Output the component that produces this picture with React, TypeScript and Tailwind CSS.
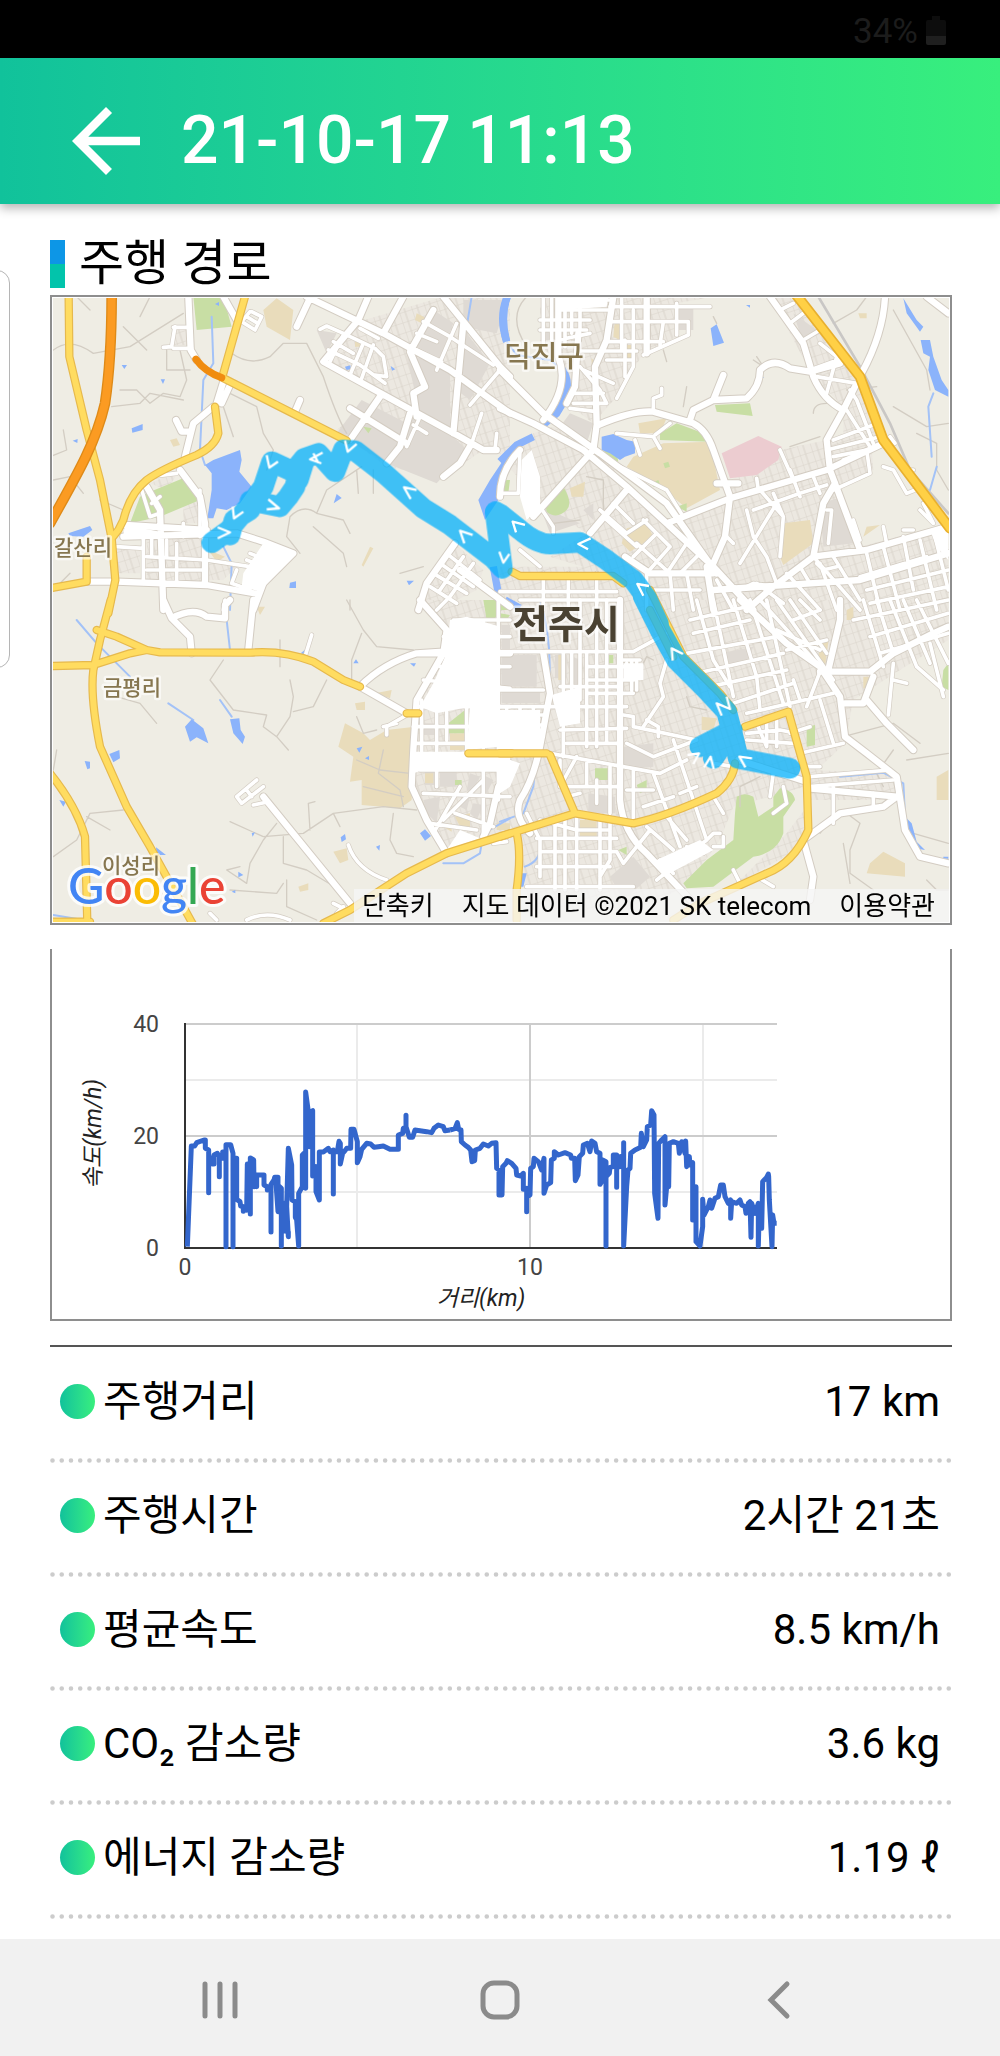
import React from 'react';
import { MdArrowBack } from 'react-icons/md';

type Tile = 'nw' | 'ne' | 'sw' | 'se';
type TilePaths = Partial<Record<Tile, string>>;

// The map is drawn in four tiles, each one at three times the map's scale
const TILE_TRANSFORM: Record<Tile, string> = {
  nw: 'translate(50 290) scale(0.33333)',
  ne: 'translate(500 290) scale(0.33333)',
  sw: 'translate(50 600) scale(0.33333)',
  se: 'translate(500 600) scale(0.33333)',
};

const BLOCKS: TilePaths = {
  nw: 'M925 95L1180 20H1380V500L1300 480L1180 560L1010 530L860 420L980 320L820 215Z M1215 760L1300 840L1280 900L1160 960H1105L1130 880Z M290 740H470V880H290Z M300 580L390 540L350 600Z M370 115H410V165H370Z M400 640L450 635L465 700H400Z M200 770H270V850H200Z M470 810L560 830L520 870H470Z',
  ne: 'M120 20H640L530 40V140L430 190L350 320L280 400L200 340L170 220L120 160Z M160 410L300 480L380 590L500 700L690 620L660 590L840 480L980 450L1110 400L1120 540L1010 590L1080 770L1345 700V960H440L380 870L150 800L260 730L120 640L0 500L100 430Z M810 20H890L1070 260L1150 450L1030 440V350L940 260Z M0 830H380L470 960H0Z',
  sw: 'M1110 0L1190 90L1180 160L1100 300L1090 450L1085 560L1130 660L1190 760L1310 715L1380 690V0Z',
  se: 'M0 0H1345V120L1200 210L1060 300L1035 430L930 530L915 560L700 620L660 720L560 860L400 930H90L50 700L0 640Z M930 510L1180 520L1190 600L930 600Z M860 700L920 620L910 740L800 800L700 860Z',
};

// Dense residential areas where the streets run together
const DENSE_STREETS: TilePaths = {
  nw: 'M640 760L725 795L630 905L575 890L580 850Z M225 705L330 725L320 745L220 735Z',
  ne: 'M180 20H325L320 50L180 60Z M65 510L95 480L120 560V650L80 690L60 620Z M1290 720L1345 700V810L1310 770Z',
  sw: 'M1200 60L1250 50L1350 80L1345 440L1250 450L1260 320L1160 340L1110 320L1150 250L1190 160Z M1090 455H1380V510H1120L1090 520Z M1190 750L1230 690L1290 715Z',
  se: 'M0 330H120V450H0Z M155 285L240 260V370L180 380Z M370 190H430V240H370Z M0 470L60 490L30 560L0 580Z M470 780L600 720L640 750L490 830Z',
};

const DARK_BLOCKS: TilePaths = {
  nw: 'M935 330L1070 400L1130 350L1210 440L1250 480L1160 580L1010 520L860 430Z M1070 190L1200 240L1200 420L1110 380Z M1150 60L1210 100L1160 230L1080 180Z M1240 30H1370L1340 130L1240 110Z M800 120L860 130L830 190Z M1250 130L1320 220L1260 330L1220 300Z',
  ne: 'M240 700L120 650L150 730Z M530 50H580V120H530Z M960 640L1030 620L1060 760L970 770Z M250 660L280 640V690Z M130 120H180V150H130Z M880 70L950 120L910 160Z M210 370L280 400L260 460L180 410Z',
  sw: 'M1355 75H1380V150H1355Z M1205 105H1250V145H1205Z M1265 70H1285V100H1265Z M1320 165H1335V200H1320Z M1320 215H1340V260H1320Z M1355 175H1380V250H1355Z M1125 515H1155V555H1125Z M1170 515H1220V560H1170Z M1260 520L1290 530L1270 570H1250Z M1300 525L1330 540L1310 580H1290Z M1120 600L1170 590L1160 670L1130 640Z M1235 590H1260L1250 630L1230 620Z M1270 610L1300 615L1280 660L1260 640Z M1120 370H1155V405H1120Z M1265 275H1280V310H1265Z M1265 330H1280V370H1265Z M1355 275H1380V305H1355Z',
  se: 'M5 165H110V260H5Z M5 275H120V310H5Z M165 165H200V235H165Z M665 160L760 140L740 190L680 200Z M330 830L400 770L450 830L370 900Z M265 580L345 590V640H265Z M370 440L460 430V500L370 510Z M215 170L245 180V260H215Z',
};

const GREENS: TilePaths = {
  nw: 'M430 20H520L545 110L440 120Z M290 610L410 560L450 630L330 680L240 700L270 620Z M940 410L965 415L955 430Z M1330 930H1380V960H1330Z',
  ne: 'M645 345L750 340L758 378L650 365Z M480 430L530 400L610 430L625 455L480 450Z M135 640Q160 590 190 590Q220 640 200 660Q170 690 140 665Z M310 480L350 490L355 515H330Z M490 520l15 -5l5 15l-15 5Z M455 580l20 -10l5 15l-20 5Z M530 650L560 640V665Z M0 570H30L25 610H0Z',
  sw: 'M1195 370L1245 330L1250 400H1195Z M1300 0H1380L1330 60H1310Z M1215 540H1235V555H1215Z',
  se: 'M710 590Q735 575 760 590L775 650L820 620L820 590L840 565Q880 570 885 600L850 650V700Q830 760 760 770L640 860L560 865L550 850L620 780L700 720L705 640Z M285 505H325V540H285Z M920 380L945 375V435L920 440Z M410 555L440 540V570L420 580Z M1330 210L1345 190V270L1325 260Z M355 750L380 740V765Z M0 40L30 45L20 60L0 55Z M325 165H340V190H325Z',
};

const SANDS: TilePaths = {
  nw: 'M640 60L680 25L730 60L720 150L650 110Z M435 20H460V70H440Z M360 450L380 445L390 465L370 470Z M475 780L525 800L500 815Z M960 770L970 775L940 830L935 825Z M1100 70L1130 85L1115 100L1095 90Z M915 155H935V170H915Z',
  ne: 'M400 500L490 460L630 455L660 600L560 655L480 590L380 530Z M415 400L500 385L480 430L420 430Z M210 595L255 575L250 620L215 620Z M850 700L930 690L940 760L850 825L835 790Z M1075 70H1100V85H1080Z M380 715L440 700L460 740L390 785L365 760Z M345 90L370 110L360 150L340 140Z M380 165H405V215H380Z M275 205L295 225V255L275 240Z M1100 710L1140 705L1090 740Z',
  sw: 'M885 370L940 400L960 420L1010 390L1095 380L1085 600L1050 625L935 615V540L900 545L910 470L865 440Z M1200 400H1250V450H1200Z M1205 110H1240V140H1205Z M1125 520H1150V550H1125Z M850 755L890 745L895 780L870 790Z M745 860L775 850V870L750 875Z M915 310L945 305V330H920Z M975 280L1025 270L1020 295Z M620 20H645L630 45Z M1215 650L1260 640V690L1230 680Z M1340 670H1380V690H1340Z M1180 680L1205 670V695Z',
  se: 'M605 350L650 355L640 390H605Z M240 660H290V720H240Z M1110 790L1150 755L1215 790V830L1100 820Z M960 130L985 125L975 200L955 180Z M1310 530L1345 510V600H1310Z M1090 230H1120V265H1090Z M1040 30L1060 20V60H1040Z M175 165H190V240H175Z',
};

const PINKS: TilePaths = {
  ne: 'M665 490L775 438L845 470L835 510L770 555L690 565Z',
};

const WATERS: TilePaths = {
  nw: 'M465 525L490 510L570 480L575 510L568 545L605 590L570 640L530 660L500 655L490 685H472L485 600V550Z M1380 480L1320 570L1285 630L1305 690L1345 630Z M55 730L120 708L127 720L100 740L60 738Z M245 415L278 402V420L247 428Z M215 225h16l-8 12Z M332 268h13l-6 14Z M68 452l15 -5l-1 12Z M860 612l15 12l-24 16Z M720 878l18 -4v20h-20Z M1070 872h22l-15 14Z M885 230l16 -4l2 12l-14 2Z M1022 228l14 10l-10 4Z M495 42l12 -6v12Z',
  ne: 'M305 440L340 432L380 450L405 455V490L375 500L360 510L330 490L305 480Z M632 115L650 103L672 158L640 168Z M738 45h12v8Z M1210 25L1220 70L1260 125L1270 110L1250 90Z M1262 150L1290 150L1300 200L1325 270L1345 300V320L1305 300L1285 240L1290 200L1270 190Z M780 258l12 4l-10 8Z',
  sw: 'M405 380L425 358L460 385L475 430L440 412L420 425Z M540 358L568 355L572 390L585 410L578 432L550 400Z M178 462L208 450L210 475L190 487Z M104 483L120 485V505L112 508Z M318 742L348 765L320 765Z M1110 700L1125 688L1143 708L1125 722Z M872 712L885 702L888 718L875 726Z M565 815L580 825L565 832Z M605 700L615 697L608 710Z M978 740L990 735L988 752Z M910 190L918 178L926 190Z M752 160L768 147V165Z M1080 190H1098L1092 200Z M920 445L937 440L928 458Z M945 475L957 468V480Z M1305 680L1325 655V680L1308 690Z M28 600L48 605L40 620Z M545 875L556 870V880Z',
  se: 'M1215 650L1235 670L1250 725L1275 750L1245 745L1225 700Z M62 820H80L70 860H62Z M140 262H150V310H138Z M0 0H20L50 15L30 20Z M1330 770H1345V776H1330Z',
};

const RIVERS: TilePaths = {
  nw: 'M1372 20Q1345 80 1370 155 M1330 830L1345 910',
  ne: 'M22 20Q0 80 20 155 M185 235Q225 290 170 370L120 412 M100 440L50 465L0 515 M15 930L60 955',
};

const STREAMS: TilePaths = {
  nw: 'M485 80L490 220L460 270L450 480L465 525 M520 770L545 820L540 960 M1265 20L1250 110',
  ne: 'M20 155L50 195L150 210L190 240 M1300 310L1285 350L1295 500 M1310 530L1290 600',
  sw: 'M80 60L140 130L240 230 M355 310L430 360 M510 300L545 350 M530 60L540 150 M1180 790H1240L1290 760L1300 700L1380 655 M10 945L100 960',
  se: 'M120 0Q160 130 145 280L110 460L100 560L70 640L0 665 M120 720Q130 780 75 800 M1020 530L1150 518L1210 550L1215 650',
};

const TRACKS: TilePaths = {
  nw: 'M10 180Q60 140 130 190L240 170L400 70 M185 350L270 340L300 310L400 330 M220 110L290 180 M210 300L260 300L300 340L340 310L390 320L410 270L390 180 M540 310L620 350L640 430L670 480L650 540 M545 190Q600 230 660 200L700 160L770 160 M770 160L820 260Q860 380 890 430 M350 180V240L420 240 M0 500L50 480L40 420 M10 570L60 560L100 610 M150 630L220 660 M520 350L550 440 M800 670L880 690L900 730 M790 710L880 790L890 830 M935 530L830 600L800 670Q760 640 720 680L710 740L750 790 M900 960V930 M920 540L925 610 M970 540V610 M1050 850L1120 830 M60 850L20 890 M80 20L120 60 M300 20L270 80',
  ne: 'M80 20Q20 80 80 170 M490 180L500 215 M640 80L650 100 M560 290L550 350 M770 200L790 230L760 210 M1000 100L1070 60L1100 20 M1180 60L1280 240L1290 300 M1345 400L1280 410L1180 350 M1250 430L1310 460V540L1345 600 M1040 300L1130 290 M940 370Q940 340 980 340 M870 470L960 440 M160 700L240 690 M260 560L310 570V670',
  sw: 'M520 180L480 240L550 330L650 345L640 380L680 410L715 450 M720 240L730 290L720 350L680 410 M830 240L790 320L730 335 M890 0L940 90L980 140L1090 150 M935 100L905 180V240 M690 120V200 M200 290L270 310L320 370 M10 770L80 720L120 640L220 630 M110 650L180 690 M540 665L640 710L760 700L850 640L1000 620L1100 630 M780 690L775 610L795 605 M680 670L640 720L600 790L590 850L530 810L570 800 M700 710V790L770 810L870 870 M710 840V920L800 960 M540 870L680 880L700 850 M1030 640L1020 720L1040 760L1090 770 M850 640L870 680 M920 350L940 400L980 390 M20 450L10 510 M1000 450L985 520L1050 570L1060 620 M920 480L990 510L1080 520 M940 560L1060 590',
  se: 'M1040 640L1080 670L1050 750V820L1120 870 M1190 600L1240 700L1345 730 M1220 480L1345 460 M1030 410L1180 370L1260 430 M400 250L440 170L460 180 M560 290L570 320L620 330 M380 180L400 200 M720 620V560L780 530 M1280 840L1310 870L1345 870 M990 660L960 700 M1050 850L1030 730 M1180 450L1130 520L1150 560',
};

const MINOR_ROADS: TilePaths = {
  nw: 'M375 110L365 170L340 172 M370 112H415 M370 175H425 M600 65L575 95L615 120L635 80L605 65 M590 80L620 98 M810 118L830 108L880 130L975 175L1000 200L1010 260L975 255 M835 180L930 225L1005 280 M850 155L910 190 M880 135L840 215 M940 160L900 255 M970 165L935 265 M1100 130L1160 155 M1120 95L1200 140L1330 225 M1100 180L1175 215 M1160 240L1220 100 M1295 370L1265 460 M1350 240L1260 345 M1110 380L1070 470 M1090 405L1130 430 M930 115L985 145 M275 600L300 680L330 670 M305 640L330 620 M300 560L380 550 M280 740V880 M305 740V800 M350 750V800 M380 760V880 M400 700V740 M450 600V740 M290 840H460 M200 770L280 775 M290 800L470 810L600 830 M560 840L545 880L600 900 M600 790L650 810 M590 810L640 830 M525 930L520 960 M1340 430L1335 480 M1190 790L1290 870 M1170 820L1270 890 M1150 850L1250 910 M1240 800L1170 900 M1270 820L1200 920 M1140 890L1220 940',
  ne: 'M130 20V160 M155 20V150 M195 20V170 M215 20V130 M240 20V120 M120 90H270 M120 120H260 M180 60H330 M180 30H330 M175 150L270 130 M365 20V180 M330 50H630 M335 95H565V135L430 195 M325 155H490 M400 60V230L350 325 M530 40V135 M490 95L480 165 M240 183H410 M320 210H400 M375 150V260 M240 230L300 300L320 340 M215 310H310 M220 340H320 M210 355L290 365 M250 240L340 280 M460 360V325L485 315V295 M350 430L460 440L480 475 M465 435L510 400 M405 450L420 495 M340 520L500 600L550 680 M60 480L55 610H0 M120 650L160 710V730 M300 660L380 730L440 690 M340 640L400 700 M320 690L410 770 M430 690L510 770 M410 760L510 850 M470 730L400 800 M510 770L440 850 M560 760L500 850 M600 790L540 850 M840 480L880 570 M770 565L775 600 M820 610L850 680L840 800 M740 660L760 740L800 800L830 880 M830 640L720 820 M760 660L900 610L980 585 M780 600L850 680 M940 560L960 610 M870 540L900 620 M1000 500L1100 480L1110 550L1000 600 M1040 360L1110 470 M1000 450L1120 405 M980 480L1140 440 M1070 330L1120 460 M1050 300L1070 330 M1030 510L1110 480 M910 150L960 120 M930 240L1040 200 M950 260L1070 280 M960 160L1010 200L980 310 M840 60L880 40 M870 100L910 70 M1150 530L1180 540L1220 610L1245 600 M1150 710L1160 760 M1060 690L1080 750 M980 660H995L985 760 M1170 440L1185 460 M1220 540H1240 M1100 790L1140 960 M1150 770L1200 960 M1210 740L1240 900 M1260 750L1310 960 M1300 720L1345 900 M1100 900L1345 840 M1080 860L1280 800 M1110 940L1345 890 M960 820L1010 960 M860 850L960 960 M940 800L1080 960 M900 830L930 880 M950 820L970 840L1010 830 M1000 800L1080 930 M770 880L850 940 M720 900L760 880L820 890 M650 870L700 960 M450 900H600 M510 850L520 960 M560 850L580 960 M440 850V960 M130 850V960 M205 850V960 M290 850V940 M0 905H350 M60 930H350 M60 780L120 830 M1260 660L1300 700L1270 640 M1210 720H1240 M680 740L700 760',
  sw: 'M1210 60H1380 M1180 110H1380 M1160 160H1380 M1170 200H1380 M1120 240L1380 265 M1100 320L1380 320 M1090 380H1380 M1090 430H1380 M1090 485H1380 M1110 510L1380 510 M1120 580L1380 590 M1180 660L1300 540 M1150 700L1230 560 M1140 670L1280 690 M1250 60V480 M1300 60V700 M1345 0V600 M1190 100V420 M1160 250V560 M1115 300V500 M1215 640L1330 680 M785 105L765 170 M1070 345L1010 380V405 M1000 380L1040 370 M620 540L560 590L575 610L640 560 M590 570L605 590 M610 615L655 605 M895 735Q920 810 1010 840 M860 940L880 920 M850 910L890 930 M480 940L500 960 M590 960Q650 930 720 960 M1330 730L1370 725 M1160 30L1190 0',
  se: 'M0 155H400L500 100 M0 270H130 M0 320H380 M0 345H130 M0 375H130 M0 410H130 M20 320V450 M60 320V450 M100 320V450 M190 160V470 M215 160V300 M240 0V300 M260 160V440 M290 0V440 M320 0V430 M260 200H410 M260 240H400 M260 280H400 M370 180H420 M380 190V230 M395 180V270 M410 180V270 M180 260H360 M180 390L380 385 M200 430H360 M370 345L400 350V380L590 420 M430 380L490 290L480 250L500 180 M440 360L475 380V410 M380 430L460 470L590 420 M150 460L480 520L560 480 M230 470L180 560 M180 480V560 M260 490V560 M290 540V610 M200 560H360 M240 580L200 590 M330 500V640 M400 510V660 M460 520L540 740 M520 420L620 720 M430 620L520 590 M440 680L520 750 M380 570H460 M540 580L590 560 M500 650L560 720 M640 590L670 640 M660 700H640L620 720L470 840 M640 740H670V710 M560 740L610 760 M480 780L520 820 M500 800L600 760 M80 640L120 720V830 M165 650V870 M195 650V870 M230 640V870 M300 660V870 M330 660V780L300 830 M110 715H350 M120 755H350L370 790L450 690 M110 800H330 M80 860H400 M120 660L230 690L330 690 M560 160L830 110 M590 220L850 160 M630 260L860 210 M700 310L880 250 M740 340L1000 280 M590 0L640 180L690 260 M640 0L700 290 M700 0L770 230L780 330 M750 0L850 310 M800 0L870 320 M580 100L750 60 M570 60L740 20 M780 0L960 200 M830 0L1000 240 M870 0L980 160 M900 0L960 60 M880 60L960 30 M830 90L960 150 M860 150L980 120 M900 300L880 240 M960 215L920 320 M800 350V440 M770 370L800 440 M830 360V440 M740 400L840 390L890 400 M740 420L880 430 M870 400L930 380 M900 460L1030 430 M905 500H960 M1000 430L960 300 M820 520L810 590 M850 560L860 610L820 640 M1090 0L1150 200 M1130 0L1180 160 M1170 0L1250 200 M1210 0L1290 190 M1250 0L1345 190 M1060 60L1345 0 M1110 110L1345 40 M1140 160L1345 100 M1250 200L1330 270 M1290 130L1330 290 M1180 190L1165 345 M1180 240L1220 250 M1000 560V670 M930 530L1170 510 M925 560L1180 540 M1120 580V620 M700 810L720 850 M770 830L820 860 M640 490L700 500',
};

const MAJOR_ROADS: TilePaths = {
  nw: 'M415 20L422 180L440 210 M110 875L200 875L470 885L625 912 M520 275L500 340 M540 285L515 340 M490 350L430 400L405 500 M378 390L395 425H420 M390 540L450 620L465 700V880 M290 590L330 660L340 960 M225 705L470 720 M220 740L560 730L640 755L730 790L640 880L610 960 M520 20L560 90 M775 35L740 110 M770 20L1000 130L1200 240L1380 370 M925 90L820 215L1230 440L1300 480L1340 480 M1180 20L1350 230L1380 260 M1060 20L1000 130 M955 20L925 90 M1150 60L1080 185L1125 290L1090 310L1100 380 M1240 100L1210 430 M990 320L900 450 M900 355L1070 460 M1080 370L1050 470L1010 520 M1265 460L1230 520L1180 560 M1215 760L1130 880L1105 960 M1230 840L1380 950 M750 330L735 365',
  ne: 'M0 355L100 400L250 480L380 590L500 700L640 830L760 960 M0 240L130 370L300 490L500 640L650 850 M175 20V200Q210 290 130 390 M235 130L225 290L200 340 M290 400L285 230L320 150L340 20 M440 20V190 M295 405Q400 360 460 365L580 400Q620 420 640 480L690 620 M570 390L580 360L640 330L740 325Q780 290 780 240Q820 200 870 235L930 245L1020 220 M640 330L670 255 M290 405L280 480L100 680 M500 700L690 625L980 540L1150 460 M690 620L675 740L640 820 M810 20L910 160L940 260Q970 330 1030 360L980 450L990 540L1080 780 M1030 360L1065 290 M1155 20Q1150 130 1085 250 M1005 580L970 640L940 800L820 890L740 960 M940 800L1100 780L1345 710 M640 900L1080 870L1345 790 M380 600L270 730 M375 800L450 850H640 M650 580H715 M620 830L640 960 M1280 20L1345 70 M0 620Q0 540 60 480',
  sw: 'M340 0L365 55L420 110L425 160 M365 55Q430 20 470 50L525 55L525 15L540 0 M610 0L595 150 M930 260Q1000 190 1100 160L1180 155 M930 260L1070 340 M640 590L900 910 M1110 0L1190 90L1180 160L1100 300L1090 450L1085 560L1130 660L1190 760 M1345 560L1320 670L1300 710 M1110 160H1380',
  se: 'M360 0V600Q370 700 440 760L600 930 M130 160L150 280L120 440Q100 540 60 600Q40 650 90 700 M720 0L860 130L960 200L1020 290L1035 410L1100 460L1190 530L1215 690L1260 770L1345 790 M960 215H1110L1180 160L1300 100L1345 80 M985 210L1020 60V0 M1100 300L1160 370L1240 450 M1035 310H1090L1120 230 M925 565L1190 590L1150 620L1020 640L910 720L940 830L930 900 M715 480L920 545',
};

const YELLOW_ROADS: TilePaths = {
  nw: 'M56 20L58 200L110 420L150 570L185 745L196 870L175 970 M585 20L520 250 M515 262L890 452 M495 350L505 430Q495 470 440 495Q330 540 290 570Q240 610 220 690L205 720L185 745 M0 895L110 875V800',
  ne: 'M35 845L60 858H340L370 880 M450 960L520 1100',
  sw: 'M182 0L150 120L130 210Q120 290 150 440L230 620L300 740L430 975 M10 198L130 195L240 160L290 150 M140 90L200 110L290 150L330 157L600 158Q700 150 790 185L880 240L930 260 M1070 340H1105 M1255 460H1385 M0 520Q80 620 105 710L112 970 M820 970L900 930L1070 820L1190 760L1380 700 M10 965H120',
  se: 'M0 460H140 M150 465L225 640 M0 710L225 640L400 670Q500 650 650 580Q700 540 705 490 M735 380L865 335L920 530L925 690Q880 790 800 820L600 910L520 960 M50 700Q65 760 50 870V960 M450 -30L550 170L660 280L700 330',
};

const HIGHWAY: TilePaths = {
  ne: 'M885 10L1080 260L1150 450L1350 715',
};

const EXPRESSWAY: TilePaths = {
  nw: 'M185 10C185 120 180 240 165 340C140 450 90 540 0 700',
};

const RAILWAY: TilePaths = {
  nw: 'M1190 20L1285 145',
  ne: 'M955 20L1080 230L1170 400L1230 540L1345 670',
};

const ROUTE: TilePaths = {
  nw: 'M485 758L535 722L570 680L600 645L640 590L665 515L730 545L762 505L805 490L855 545L880 480L915 482L1000 548L1120 655L1200 705L1330 805L1357 835L1336 670 M600 632L690 650L715 620L735 590L745 540 M540 735L552 690L600 660 M765 505L745 570',
  ne: 'M-14 665L0 672L60 720Q110 762 150 762L240 757L320 810L400 870L440 925L475 1000',
  se: 'M430 -10L480 90L530 180L620 270L680 335L697 400L715 475L870 505 M697 390L600 440 M690 400L640 475',
};

const ROUTE_ARROWS: TilePaths = {
  nw: 'M885 452L893 485L920 462 M818 488L780 508L814 520 M790 490L805 518 M650 495L658 533L684 515 M650 658L687 655L655 628 M548 650L552 685L580 665 M503 745L540 727L503 712 M1100 600L1062 592L1082 627 M1268 735L1230 722L1243 760 M1348 785L1360 818L1378 792',
  ne: 'M75 705L38 695L48 727 M272 745L235 762L264 778 M447 888L412 882L430 917',
  se: 'M518 182L515 145L549 162 M665 347L650 310L690 327L680 290 M756 475L718 470L736 502 M562 465L597 460L580 492 M612 502L632 470L641 507',
};

const SPEED_FIRST =
  '412,920 424,618 434,618 440,608 462,600 466,600 466,625 476,630 476,758 476,650 487,655 487,672 492,672 492,645 502,640 508,650 508,710 508,655 518,655 518,636 528,636 528,920 528,614 542,614 549,640 549,920 549,655 560,655 560,778 570,785 572,798 580,800 580,814 580,800 590,810 592,672 601,672 601,822 601,654 611,660 612,740 606,680 620,740 620,705 642,705 642,735 652,740 652,750 663,735 663,876 663,733 672,720 674,712 684,712 684,815 678,730 694,745 694,918 694,790 704,790 705,873 715,875 715,890 710,800 715,625 725,675 726,780 736,785 736,832 740,840 746,918 746,760 757,740 757,645 762,640 767,745 767,456 775,515 778,620 782,515 788,512 788,708 798,680 798,755 808,780 808,636 820,636 835,625 840,635 850,630 850,762 850,635 862,635 867,604 871,610 871,672 878,640 885,632 890,625 902,625 903,568 912,568 922,605 922,668 930,650 935,628 950,610 962,612 972,622 985,620 1000,618 1020,628 1045,628 1045,585 1058,580 1060,565 1068,560 1068,526 1068,560 1078,592 1088,592 1095,570 1110,572 1130,575 1145,578 1152,565 1165,555 1180,560 1185,572 1200,570';

const SPEED_SECOND =
  '150,570 165,566 172,548 176,568 183,570 184,605 195,615 205,622 212,630 216,665 224,662 226,630 240,625 250,612 265,618 275,610 288,608 290,685 297,690 297,765 306,765 308,680 318,670 322,662 335,670 348,685 350,705 362,708 370,700 370,748 380,745 380,815 380,770 390,765 392,685 400,680 402,655 415,665 425,690 432,655 432,760 440,735 452,728 454,660 463,655 463,635 475,645 495,638 512,645 514,655 524,655 526,722 534,705 538,650 548,640 550,615 562,610 570,635 575,603 585,610 590,635 600,640 600,733 608,720 608,660 618,665 618,918 618,710 628,700 630,682 640,680 640,645 650,645 650,742 650,655 660,650 660,680 671,660 671,608 671,918 680,740 684,690 690,685 692,640 705,630 722,622 724,580 730,620 740,600 742,560 752,555 755,512 762,525 764,760 774,835 776,610 785,600 795,590 795,795 800,740 806,740 808,610 820,605 835,610 838,640 845,605 855,640 857,603 860,680 868,650 870,675 878,668 878,840 888,740 888,905 900,918 908,860 908,778 912,825 925,800 930,780 935,805 945,775 955,770 962,735 970,735 975,770 985,790 992,780 992,835 995,785 1010,790 1020,780 1025,795 1035,800 1038,820 1045,790 1050,785 1053,892 1055,790 1065,820 1075,790 1075,918 1078,800 1085,865 1088,725 1100,712 1105,702 1106,710 1108,780 1116,920 1118,825 1122,850 1130,850';

const STATS = [
  { label: '주행거리', value: '17 km' },
  { label: '주행시간', value: '2시간 21초' },
  { label: '평균속도', value: '8.5 km/h' },
  { label: 'CO₂ 감소량', value: '3.6 kg' },
  { label: '에너지 감소량', value: '1.19 ℓ' },
];

const PLACES = [
  { name: '갈산리', x: 83, y: 555, className: 'text-[21px] font-medium fill-[#86764f]' },
  { name: '덕진구', x: 544, y: 367, className: 'text-[29px] font-medium fill-[#86764f]' },
  { name: '금평리', x: 132, y: 695, className: 'text-[21px] font-medium fill-[#86764f]' },
  { name: '이성리', x: 131, y: 873, className: 'text-[21px] font-medium fill-[#86764f]' },
  { name: '전주시', x: 566, y: 638, className: 'text-[39px] font-bold fill-[#4a4232]' },
];

const MapLayer = ({
  paths,
  fill = 'none',
  stroke = 'none',
  width = 0,
  cap = 'round',
}: {
  paths: TilePaths;
  fill?: string;
  stroke?: string;
  width?: number;
  cap?: 'round' | 'butt';
}) => (
  <>
    {(Object.keys(paths) as Tile[]).map((tile) => (
      <path
        key={tile}
        d={paths[tile]}
        transform={TILE_TRANSFORM[tile]}
        fill={fill}
        stroke={stroke}
        strokeWidth={width}
        strokeLinecap={cap}
        strokeLinejoin="round"
      />
    ))}
  </>
);

const RouteMap = () => (
  <div className="relative border-2 border-[#8e8e8e] p-px">
    <svg viewBox="53 298 896 624" className="block w-full h-auto bg-[#efede4]" role="img" aria-label="주행 경로">
      <defs>
        <pattern id="streets" width="13" height="10" patternUnits="userSpaceOnUse" patternTransform="scale(3) rotate(-18)">
          <rect width="13" height="10" fill="#ece8e1" />
          <path d="M0 0H13M0 0V10M6 0V10" stroke="#dad4cb" strokeWidth="1" fill="none" />
        </pattern>
      </defs>
      <MapLayer paths={BLOCKS} fill="url(#streets)" />
      <MapLayer paths={DARK_BLOCKS} fill="#dfdad4" />
      <MapLayer paths={SANDS} fill="#e9dcbb" />
      <MapLayer paths={PINKS} fill="#ecccd0" />
      <MapLayer paths={GREENS} fill="#c8dea4" />
      <MapLayer paths={TRACKS} stroke="#d3cdc3" width={4} />
      <MapLayer paths={RAILWAY} stroke="#c9c7c5" width={8} />
      <MapLayer paths={STREAMS} stroke="#a3c2f7" width={6} />
      <MapLayer paths={RIVERS} stroke="#8bb3fb" width={22} cap="butt" />
      <MapLayer paths={WATERS} fill="#8bb3fb" />
      <MapLayer paths={MINOR_ROADS} stroke="#d3ccc2" width={15} />
      <MapLayer paths={MAJOR_ROADS} stroke="#d3ccc2" width={25} />
      <MapLayer paths={DENSE_STREETS} fill="#ffffff" />
      <MapLayer paths={MINOR_ROADS} stroke="#ffffff" width={11} />
      <MapLayer paths={MAJOR_ROADS} stroke="#ffffff" width={19} />
      <MapLayer paths={YELLOW_ROADS} stroke="#e6b94d" width={25} />
      <MapLayer paths={YELLOW_ROADS} stroke="#ffdc60" width={18} />
      <MapLayer paths={HIGHWAY} stroke="#e8b02f" width={32} />
      <MapLayer paths={HIGHWAY} stroke="#ffd045" width={22} />
      <MapLayer paths={EXPRESSWAY} stroke="#de8a18" width={32} />
      <MapLayer paths={EXPRESSWAY} stroke="#fb9b22" width={24} />
      <MapLayer paths={{ nw: 'M438 208Q465 245 515 263' }} stroke="#f08c10" width={22} />
      <g opacity="0.75">
        <MapLayer paths={ROUTE} stroke="#05b1fb" width={62} />
      </g>
      <MapLayer paths={ROUTE_ARROWS} stroke="#ffffff" width={7} cap="butt" />
      {PLACES.map((place) => (
        <text
          key={place.name}
          x={place.x}
          y={place.y}
          textAnchor="middle"
          paintOrder="stroke"
          stroke="#ffffff"
          strokeOpacity="0.6"
          strokeWidth="5"
          strokeLinejoin="round"
          className={place.className}
        >
          {place.name}
        </text>
      ))}
      <text
        x="68"
        y="904"
        paintOrder="stroke"
        stroke="#ffffff"
        strokeOpacity="0.8"
        strokeWidth="6"
        strokeLinejoin="round"
        className="font-['Lato',sans-serif] text-[50px] font-medium"
      >
        <tspan fill="#4285f4">G</tspan>
        <tspan fill="#ea4335">o</tspan>
        <tspan fill="#fbbc05">o</tspan>
        <tspan fill="#4285f4">g</tspan>
        <tspan fill="#34a853">l</tspan>
        <tspan fill="#ea4335">e</tspan>
      </text>
    </svg>
    <div className="absolute right-px bottom-px flex h-[33px] items-center gap-7 bg-[#f5f5f5]/80 pr-3.5 pl-2 text-[26px] leading-none whitespace-nowrap text-black">
      <button type="button">단축키</button>
      <span>지도 데이터 ©2021 SK telecom</span>
      <a href="#terms">이용약관</a>
    </div>
  </div>
);

const SpeedChart = () => (
  <div className="mt-6 border-x-2 border-b-2 border-[#8e8e8e]">
    <svg viewBox="52 949 898 370" className="block w-full h-auto" role="img" aria-label="속도(km/h) / 거리(km)">
      <path d="M185 1080H777M185 1192H777M357 1024V1247M703 1024V1247" stroke="#ebebeb" strokeWidth="2" />
      <path d="M185 1024H777M185 1136H777M530 1024V1247" stroke="#cccccc" strokeWidth="2" />
      <path d="M184 1248H777M185 1023V1249" stroke="#333333" strokeWidth="2" />
      <g fill="none" stroke="#3366cc" strokeWidth="15" strokeLinejoin="round">
        <polyline transform="translate(50 940) scale(0.33333)" points={SPEED_FIRST} />
        <polyline transform="translate(400 940) scale(0.33333)" points={SPEED_SECOND} />
      </g>
      <g className="text-[23px] fill-[#444444]">
        <text x="159" y="1032" textAnchor="end">40</text>
        <text x="159" y="1144" textAnchor="end">20</text>
        <text x="159" y="1256" textAnchor="end">0</text>
        <text x="185" y="1275" textAnchor="middle">0</text>
        <text x="530" y="1275" textAnchor="middle">10</text>
      </g>
      <g className="text-[23px] italic fill-[#222222]">
        <text x="481" y="1306" textAnchor="middle">거리(km)</text>
        <text transform="translate(101 1134) rotate(-90)" textAnchor="middle">속도(km/h)</text>
      </g>
    </svg>
  </div>
);

const StatRow = ({ label, value }: { label: string; value: string }) => (
  <li className="flex h-[114px] flex-col">
    <div className="flex flex-1 items-center pr-3 pb-1 pl-2.5 text-[42px] leading-none">
      <span className="mr-2 size-[35px] rounded-full bg-linear-to-r from-[#11c29b] to-[#38ef7d]" />
      <span>{label}</span>
      <span className="ml-auto">{value}</span>
    </div>
    <svg className="block h-[5px] w-full" aria-hidden="true">
      <line x1="2.5" y1="2.5" x2="100%" y2="2.5" stroke="#cccccc" strokeWidth="4.6" strokeLinecap="round" strokeDasharray="0 9.24" />
    </svg>
  </li>
);

const App: React.FC = () => {
  return (
    <div className="relative flex min-h-screen flex-col bg-white font-['Roboto','Noto_Sans_CJK_KR',sans-serif] text-black">
      <div className="flex h-[58px] items-center justify-end gap-2 bg-black pt-1 pr-[54px] text-[35px] leading-none text-[#1c1c1c]">
        <span>34%</span>
        <svg viewBox="0 0 20 30" className="h-[30px] w-5" aria-hidden="true">
          <path d="M6 0H14V4H18Q20 4 20 6V20H0V6Q0 4 2 4H6Z" fill="#0d0d0d" />
          <path d="M0 20H20V27Q20 29 18 29H2Q0 29 0 27Z" fill="#1f1f1f" />
        </svg>
      </div>

      <header className="relative flex h-[146px] items-center bg-linear-to-r from-[#11c29b] to-[#38ef7d] pt-5 pl-[55px] text-white shadow-[0_4px_10px_rgba(0,0,0,0.3)]">
        <button type="button" aria-label="뒤로" className="shrink-0">
          <MdArrowBack size={102} />
        </button>
        <h1 className="ml-6 text-[66px] leading-none font-medium">21-10-17 11:13</h1>
      </header>

      <div className="absolute top-[270px] -left-4 h-[398px] w-[26px] rounded-[14px] border border-[#b5b5b5] bg-white" />

      <main className="flex-1 pr-12 pb-5 pl-[50px]">
        <div className="mt-9 mb-[7px] flex items-center gap-3.5">
          <span className="h-12 w-[15px] bg-linear-to-b from-[#0d96e6] from-50% to-[#02c4ab] to-50%" />
          <h2 className="text-[49px] leading-[48px]">주행 경로</h2>
        </div>
        <RouteMap />
        <SpeedChart />
        <ul className="mt-6 border-t-2 border-[#555555] pt-0.5">
          {STATS.map((stat) => (
            <StatRow key={stat.label} label={stat.label} value={stat.value} />
          ))}
        </ul>
      </main>

      <nav className="grid h-[117px] grid-cols-3 items-center bg-[#f1f1f1] px-20 pt-1 text-[#8b8b8b]">
        <button type="button" aria-label="최근 앱" className="justify-self-center">
          <svg viewBox="0 0 40 40" className="size-10" fill="none" stroke="currentColor" strokeWidth="5" strokeLinecap="round">
            <path d="M5 4V36M20 4V36M35 4V36" />
          </svg>
        </button>
        <button type="button" aria-label="홈" className="justify-self-center">
          <svg viewBox="0 0 40 40" className="size-10" fill="none" stroke="currentColor" strokeWidth="5">
            <rect x="3" y="3" width="34" height="34" rx="11" />
          </svg>
        </button>
        <button type="button" aria-label="이전" className="justify-self-center">
          <svg viewBox="0 0 40 40" className="size-10" fill="none" stroke="currentColor" strokeWidth="5" strokeLinecap="round">
            <path d="M27 4L11 20L27 36" />
          </svg>
        </button>
      </nav>
    </div>
  );
};

export default App;
